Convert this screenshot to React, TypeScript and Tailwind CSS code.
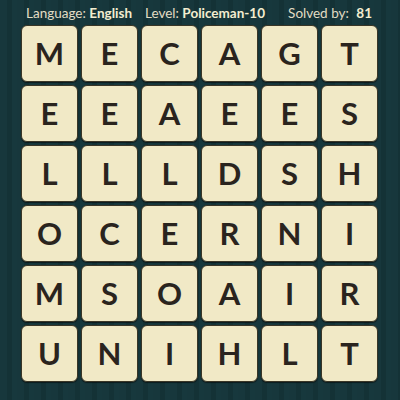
import React from "react";

const rows = ["MECAGT", "EEAEES", "LLLDSH", "OCERNI", "MSOAIR", "UNIHLT"];

export default function App() {
  return (
    <div
      className="w-[400px] h-[400px] overflow-hidden bg-[#16353a] bg-[repeating-linear-gradient(90deg,#17373c_0px,#17373c_7px,#143236_7px,#143236_12px,#17383d_12px,#17383d_17px)] flex flex-col"
      style={{ fontFamily: "Lato, 'Open Sans', sans-serif" }}
    >
      <div className="h-[25px] flex items-center text-[13.5px] text-[#e2dcc4] pl-[26px] pr-[28px] pt-[1px]">
        <div className="w-[119px]">
          Language: <span className="font-bold text-[#f3edd0]">English</span>
        </div>
        <div className="flex-1">
          Level: <span className="font-bold text-[#f3edd0]">Policeman-10</span>
        </div>
        <div>
          Solved by: <span className="font-bold text-[#f3edd0] ml-[4px]">81</span>
        </div>
      </div>
      <div className="pl-[21px] grid grid-cols-[repeat(6,57px)] grid-rows-[repeat(6,57px)] gap-[3px]">
        {rows.flatMap((r, i) =>
          r.split("").map((ch, j) => (
            <div
              key={`${i}-${j}`}
              className="rounded-[6px] bg-[#f1e9c6] border border-[#3a3626] shadow-[0_1px_1px_rgba(0,0,0,0.5)] flex items-center justify-center text-[31px] font-bold text-[#2a241e] leading-none"
            >
              {ch}
            </div>
          ))
        )}
      </div>
    </div>
  );
}
